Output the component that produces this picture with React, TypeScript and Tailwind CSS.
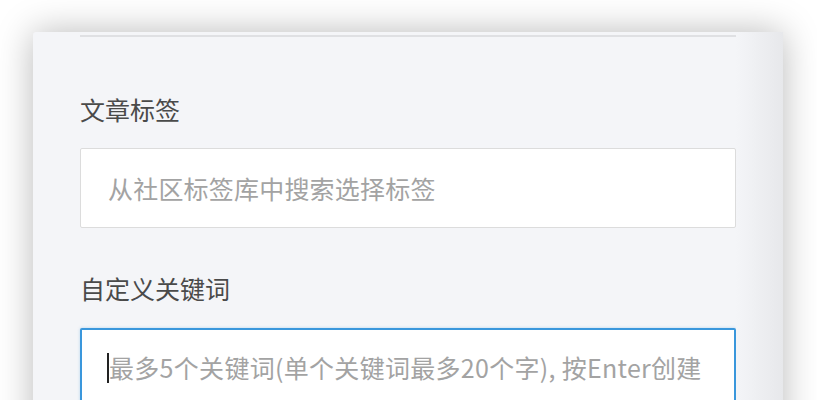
export default function App() {
  return (
    <div
      className="h-[400px] w-[817px] overflow-hidden bg-white pl-[33px] pt-[32px]"
      style={{ fontFamily: '"Noto Sans CJK SC", "Noto Sans", sans-serif' }}
    >
      {/* Sheet */}
      <div className="flex h-[420px] w-[750px] rounded-tl-[3px] bg-[#f4f5f8] shadow-[0_0_36px_rgba(0,0,0,0.28)]">
        <div className="flex flex-1 flex-col pl-[47px]">
          <div className="mt-[3px] h-[2px] bg-[#dfe0e3]" />

          {/* Tags */}
          <label className="mt-[56px] text-[25px] leading-[32px] text-[#4a4a4a]">文章标签</label>
          <input
            type="text"
            placeholder="从社区标签库中搜索选择标签"
            className="mt-[23px] h-[80px] w-full rounded-[2px] border border-[#dcdcdc] bg-white px-[27px] text-[25px] tracking-[0.2px] text-[#333] outline-none placeholder:text-[#a3a3a3]"
          />

          {/* Keywords */}
          <label className="mt-[44px] text-[25px] leading-[32px] text-[#4a4a4a]">自定义关键词</label>
          <div className="mt-[24px] flex h-[80px] w-full items-center rounded-[2px] border-2 border-[#3a97dc] bg-white pl-[25px] shadow-[0_0_3px_rgba(58,151,220,0.35)]">
            <span className="h-[30px] w-[2px] bg-[#222]" />
            <input
              type="text"
              placeholder="最多5个关键词(单个关键词最多20个字), 按Enter创建"
              className="flex-1 bg-transparent text-[25px] tracking-[0.3px] text-[#333] caret-transparent outline-none placeholder:text-[#a3a3a3]"
            />
          </div>
        </div>
        <div className="w-[47px] bg-gradient-to-r from-[#f4f5f8] to-[#e7e8eb]" />
      </div>
    </div>
  );
}
